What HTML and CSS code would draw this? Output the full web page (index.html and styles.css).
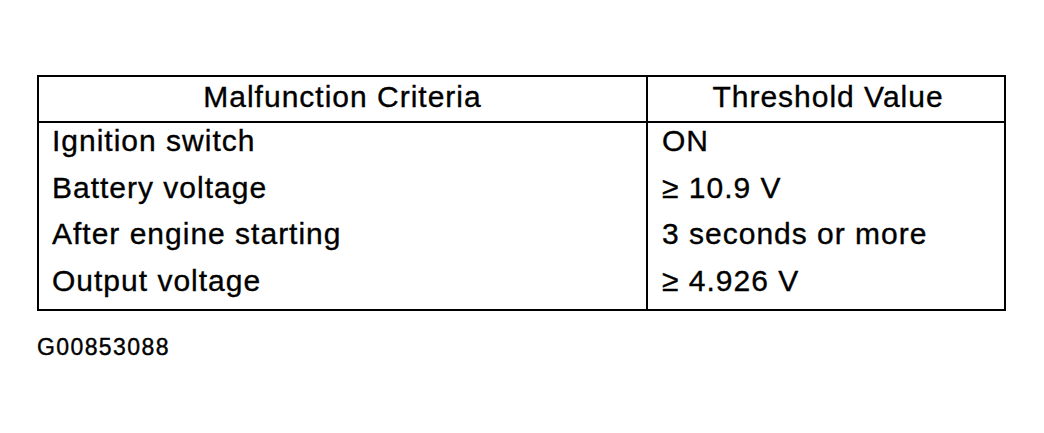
FILE: index.html
```html
<!DOCTYPE html>
<html lang="en">
<head>
<meta charset="utf-8">
<title>Malfunction Criteria</title>
<link rel="stylesheet" href="styles.css">
</head>
<body>
<div class="sheet">
  <div class="criteria">
    <div class="cell head">Malfunction Criteria</div>
    <div class="cell head value">Threshold Value</div>
    <div class="cell">Ignition switch</div>
    <div class="cell value">ON</div>
    <div class="cell">Battery voltage</div>
    <div class="cell value">≥ 10.9 V</div>
    <div class="cell">After engine starting</div>
    <div class="cell value">3 seconds or more</div>
    <div class="cell">Output voltage</div>
    <div class="cell value">≥ 4.926 V</div>
  </div>
  <div class="caption">G00853088</div>
</div>
</body>
</html>
```
FILE: styles.css
```css
html, body {
  margin: 0;
  padding: 0;
  background: #fff;
}
body {
  width: 1044px;
  height: 433px;
  overflow: hidden;
  font-family: "Liberation Sans", Arial, sans-serif;
  color: #000;
}
.sheet {
  padding: 75px 0 0 37px;
}
.criteria {
  box-sizing: border-box;
  width: 969px;
  border: 2px solid #000;
  display: grid;
  grid-template-columns: 609px 1fr;
  grid-template-rows: 46px repeat(4, 46.5px);
}
.cell {
  box-sizing: border-box;
  font-size: 30px;
  letter-spacing: 1px;
  line-height: 32px;
  padding: 2px 0 0 13px;
  white-space: nowrap;
  -webkit-text-stroke: 0.35px #000;
}
.cell:not(.value) {
  border-right: 2px solid #000;
}
.cell.value {
  padding-left: 14px;
}
.cell.head {
  border-bottom: 2px solid #000;
  text-align: center;
  padding: 4px 0 0 0;
}
.cell.head.value {
  padding-left: 4px;
}
.caption {
  margin-top: 23px;
  font-size: 23px;
  letter-spacing: 1.4px;
  line-height: 26px;
  -webkit-text-stroke: 0.4px #000;
}
```
